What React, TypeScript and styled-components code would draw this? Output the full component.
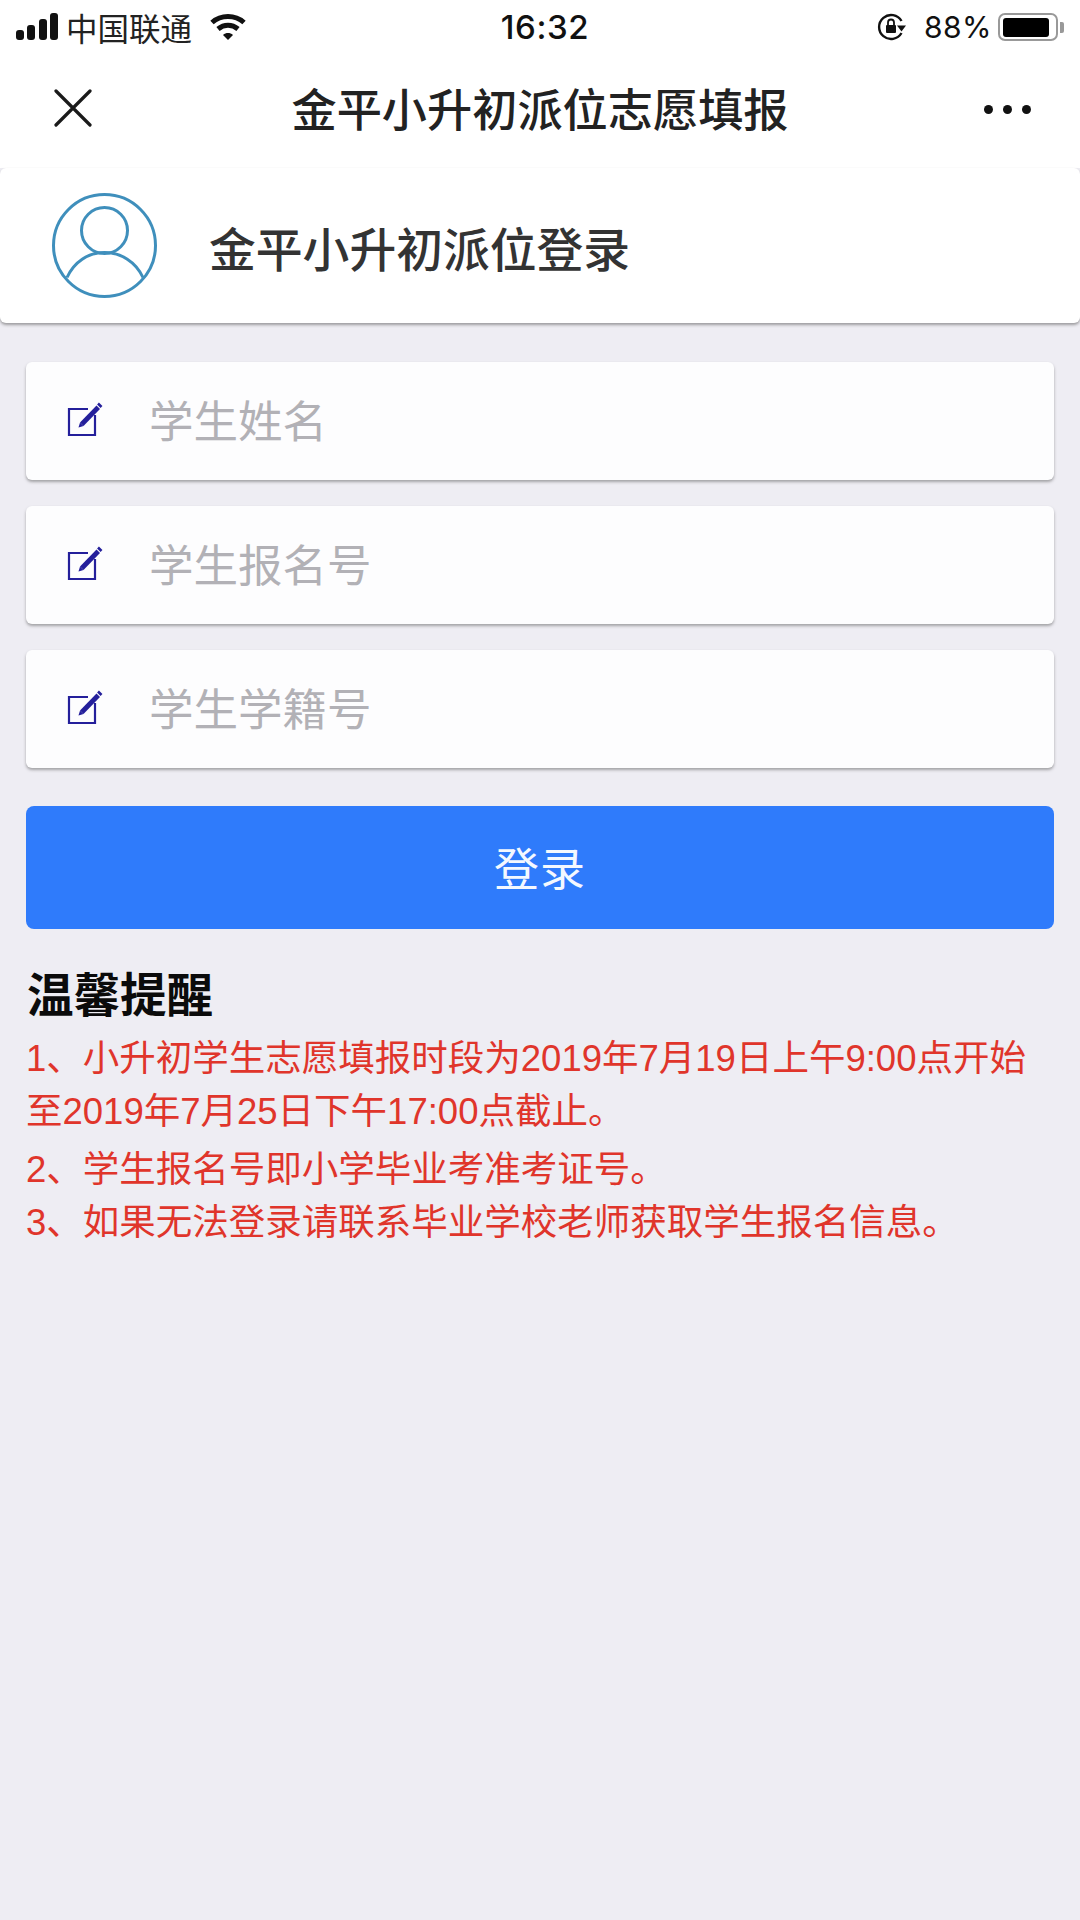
import React from "react";
import styled, { createGlobalStyle } from "styled-components";

const CJK = `"Noto Sans CJK SC", "Noto Sans", sans-serif`;
const LAT = `"Liberation Sans", "Noto Sans CJK SC", sans-serif`;

const Global = createGlobalStyle`
  html, body { margin: 0; padding: 0; background: #eeedf3; }
  * { box-sizing: border-box; }
`;

const Page = styled.div`
  width: 1080px;
  height: 1920px;
  background: #eeedf3;
  overflow: hidden;
  font-family: ${CJK};
`;

const StatusBar = styled.div`
  height: 54px;
  background: #fff;
  display: grid;
  grid-template-columns: 1fr auto 1fr;
  align-items: center;
  padding: 0 16px 0 16px;
  color: #111;
`;
const StatusLeft = styled.div`
  display: flex;
  align-items: center;
`;
const Carrier = styled.span`
  font-size: 31.5px;
  margin-left: 7px;
  margin-right: 18px;
  font-family: ${CJK};
  color: #222;
`;
const Time = styled.span`
  font: 500 33px ${`"Inter", ${LAT}`};
  letter-spacing: 0.6px;
  margin-left: 10px;
`;
const StatusRight = styled.div`
  display: flex;
  justify-content: flex-end;
  align-items: center;
`;
const Percent = styled.span`
  font: 400 30px ${`"Inter", ${LAT}`};
  margin: 0 6px 0 17px;
  letter-spacing: 0.5px;
`;
const Battery = styled.div`
  width: 60px;
  height: 28px;
  border: 2.5px solid #999;
  border-radius: 7px;
  padding: 2.5px;
  display: flex;
`;
const BatteryFill = styled.div`
  width: 46px;
  background: #000;
  border-radius: 3px;
`;
const BatteryCap = styled.div`
  width: 4px;
  height: 11px;
  margin-left: 2px;
  background: #999;
  border-radius: 0 2px 2px 0;
`;

const NavBar = styled.div`
  height: 114px;
  background: #fff;
  display: grid;
  grid-template-columns: 140px 1fr 140px;
  align-items: center;
  padding-bottom: 6px;
`;
const NavLeft = styled.div`
  padding-left: 54px;
  display: flex;
`;
const NavTitle = styled.div`
  text-align: center;
  font-size: 45.2px;
  font-weight: 500;
  color: #222;
  line-height: 56px;
  white-space: nowrap;
`;
const NavRight = styled.div`
  display: flex;
  justify-content: flex-end;
  padding: 2px 49px 0 0;
  gap: 10px;
`;
const Dot = styled.span`
  width: 9px;
  height: 9px;
  border-radius: 50%;
  background: #111;
`;

const Header = styled.div`
  height: 155px;
  background: #fff;
  border-radius: 6px;
  box-shadow: 0 2px 3px rgba(90, 90, 90, 0.55);
  display: flex;
  align-items: center;
  padding: 0 0 0 52px;
  gap: 52px;
`;
const HeaderTitle = styled.div`
  font-size: 46.8px;
  font-weight: 500;
  color: #333;
  white-space: nowrap;
  line-height: 60px;
  padding-top: 2px;
`;

const Form = styled.div`
  padding: 39px 26px 0;
  display: flex;
  flex-direction: column;
`;
const Field = styled.div`
  height: 118px;
  background: #fdfdfe;
  border-radius: 6px;
  box-shadow: 0 2px 3px rgba(90, 90, 90, 0.5);
  display: flex;
  align-items: center;
  padding-left: 41px;
  margin-bottom: 26px;
`;
const Placeholder = styled.span`
  font-size: 44.5px;
  color: #b2b1b6;
  margin-left: 46px;
  line-height: 1;
  margin-bottom: 3px;
`;
const LoginButton = styled.div`
  height: 123px;
  margin-top: 12px;
  background: #2f7bfb;
  border-radius: 8px;
  color: #f4f8ff;
  display: flex;
  align-items: center;
  justify-content: center;
  font-size: 45px;
  letter-spacing: 1px;
  padding-bottom: 3px;
`;
const Tips = styled.div`
  padding: 35px 0 0 1px;
`;
const TipsTitle = styled.div`
  font-size: 46.5px;
  font-weight: 700;
  color: #0b0b0b;
  line-height: 56px;
  margin-bottom: 12px;
`;
const TipLine = styled.div<{ $gap?: boolean }>`
  font-family: ${LAT};
  font-size: 36.5px;
  color: #e0352b;
  line-height: 53px;
  white-space: nowrap;
  margin-bottom: ${(p) => (p.$gap ? "5px" : "0")};
  margin-left: -1px;
`;

const SignalIcon = () => (
  <svg width="43" height="28" viewBox="0 0 43 28" fill="#111">
    <rect x="0" y="17" width="8" height="10" rx="3" />
    <rect x="11" y="12" width="8" height="15" rx="3" />
    <rect x="23" y="6" width="8" height="21" rx="3" />
    <rect x="34" y="0" width="8" height="27" rx="3" />
  </svg>
);

const WifiIcon = () => (
  <svg width="36" height="28" viewBox="0 0 36 28" fill="none" stroke="#111" strokeWidth="5">
    <path d="M2 9.500C11 1.500 25 1.500 34 9.500" />
    <path d="M8 16c6-5 14-5 20 0" />
    <path d="M13 22 18 27l5-5c-3-2.600-7-2.600-10 0z" fill="#111" stroke="none" />
  </svg>
);

const LockRotateIcon = () => (
  <svg width="30" height="28" viewBox="0 0 30 28" fill="none">
    <path d="M24.500 8A12 12 0 1 0 24.500 20" stroke="#111" strokeWidth="2.400" />
    <path d="M29 12.500h-9l4.500 6z" fill="#111" />
    <rect x="9" y="12" width="10" height="8" rx="1" fill="#111" />
    <path d="M11 12V9.500a3 3 0 0 1 6 0V12" stroke="#111" strokeWidth="1.800" />
  </svg>
);

const CloseIcon = () => (
  <svg width="38" height="38" viewBox="0 0 38 38" stroke="#1a1a1a" strokeWidth="3.200" strokeLinecap="round">
    <path d="M2 2 36 36M36 2 2 36" />
  </svg>
);

const AvatarIcon = () => (
  <svg width="105" height="105" viewBox="0 0 105 105" fill="none" stroke="#3f8fbc" strokeWidth="3">
    <circle cx="52.500" cy="52.500" r="51" />
    <circle cx="52.500" cy="37.500" r="23" />
    <path d="M15 84.500C22 69 36 59.500 52.500 59.500S84 69 91 84.500" />
  </svg>
);

const EditIcon = () => (
  <svg width="36" height="36" viewBox="0 0 36 36" fill="none" style={{ overflow: "visible" }}>
    <path d="M28 12V32H2V6H21" stroke="#241f9b" strokeWidth="2.200" />
    <path d="M13 19.500 16.500 23 33 6l-3.500-3.500z" fill="#241f9b" />
    <path d="M13 19.500 11.500 24.500 16.500 23z" fill="#241f9b" />
    <path d="M31 .5 34.500 4" stroke="#241f9b" strokeWidth="2.600" />
  </svg>
);

export default function App() {
  return (
    <Page>
      <Global />
      <StatusBar>
        <StatusLeft>
          <SignalIcon />
          <Carrier>中国联通</Carrier>
          <WifiIcon />
        </StatusLeft>
        <Time>16:32</Time>
        <StatusRight>
          <LockRotateIcon />
          <Percent>88%</Percent>
          <Battery>
            <BatteryFill />
          </Battery>
          <BatteryCap />
        </StatusRight>
      </StatusBar>
      <NavBar>
        <NavLeft>
          <CloseIcon />
        </NavLeft>
        <NavTitle>金平小升初派位志愿填报</NavTitle>
        <NavRight>
          <Dot />
          <Dot />
          <Dot />
        </NavRight>
      </NavBar>
      <Header>
        <AvatarIcon />
        <HeaderTitle>金平小升初派位登录</HeaderTitle>
      </Header>
      <Form>
        {["学生姓名", "学生报名号", "学生学籍号"].map((label) => (
          <Field key={label}>
            <EditIcon />
            <Placeholder>{label}</Placeholder>
          </Field>
        ))}
        <LoginButton>登录</LoginButton>
        <Tips>
          <TipsTitle>温馨提醒</TipsTitle>
          <TipLine>1、小升初学生志愿填报时段为2019年7月19日上午9:00点开始</TipLine>
          <TipLine $gap>至2019年7月25日下午17:00点截止。</TipLine>
          <TipLine>2、学生报名号即小学毕业考准考证号。</TipLine>
          <TipLine>3、如果无法登录请联系毕业学校老师获取学生报名信息。</TipLine>
        </Tips>
      </Form>
    </Page>
  );
}
